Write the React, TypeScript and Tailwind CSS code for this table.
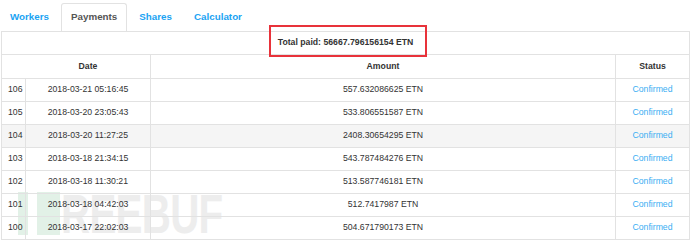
import * as React from "react"

const payments = [
  { id: 106, date: "2018-03-21 05:16:45", amount: "557.632086625 ETN" },
  { id: 105, date: "2018-03-20 23:05:43", amount: "533.806551587 ETN" },
  { id: 104, date: "2018-03-20 11:27:25", amount: "2408.30654295 ETN", hover: true },
  { id: 103, date: "2018-03-18 21:34:15", amount: "543.787484276 ETN" },
  { id: 102, date: "2018-03-18 11:30:21", amount: "513.587746181 ETN" },
  { id: 101, date: "2018-03-18 04:42:03", amount: "512.7417987 ETN" },
  { id: 100, date: "2018-03-17 22:02:03", amount: "504.671790173 ETN" },
]

const tabs = ["Workers", "Payments", "Shares", "Calculator"]

export default function App() {
  return (
    <div className="relative h-[242px] w-[690px] overflow-hidden bg-white font-['Liberation_Sans',Arial,sans-serif] text-[8.7px] text-[#333]">
      {/* watermark, sits behind the table text */}
      <div className="pointer-events-none absolute left-[18px] top-[192px] z-0 flex h-[43px] items-center">
        <div className="h-[43px] w-[10px] bg-[#e2f1e7]" />
        <div className="ml-[9px] h-[43px] w-[23px] bg-[#e2f1e7]" />
        <div className="ml-[1px] w-[220px] whitespace-nowrap">
          <span className="inline-block origin-left scale-x-[0.72] text-[56px] font-bold leading-none tracking-[-1px] text-[#ededed]">
            REEBUF
          </span>
        </div>
      </div>

      <div className="relative z-10 flex h-[31px] items-end">
        {tabs.map((tab) =>
          tab === "Payments" ? (
            <div
              key={tab}
              className="mr-[2px] flex h-[28px] items-center rounded-t-[3px] border border-b-0 border-[#e2e2e2] bg-white px-[9px] text-[9.8px] font-bold text-[#555]"
            >
              {tab}
            </div>
          ) : (
            <div
              key={tab}
              className="mr-[2px] flex h-[28px] items-center px-[10px] text-[9.8px] font-bold text-[#1aa3f3]"
            >
              {tab}
            </div>
          )
        )}
      </div>

      <div className="relative z-10 ml-[1px] w-[689px] border-x border-t border-[#e2e2e2]">
        <div className="relative flex h-[23px] items-center justify-center border-b border-[#e2e2e2] font-bold">
          <span>Total paid: 56667.796156154 ETN</span>
          <div className="absolute left-[267px] top-[-7px] h-[32px] w-[158px] border-2 border-[#e8323a]" />
        </div>

        <div className="flex h-[24px] border-b border-[#e2e2e2] font-bold">
          <div className="flex w-[149px] shrink-0 items-center justify-center border-r border-[#e2e2e2] pl-[24px]">
            Date
          </div>
          <div className="flex w-[465px] shrink-0 items-center justify-center border-r border-[#e2e2e2]">
            Amount
          </div>
          <div className="flex flex-1 items-center justify-center">Status</div>
        </div>

        {payments.map((p) => (
          <div
            key={p.id}
            className={`flex h-[23px] border-b border-[#e2e2e2] ${p.hover ? "bg-[#f5f5f5]" : "bg-transparent"}`}
          >
            <div className="flex w-[24px] shrink-0 items-center border-r border-[#e2e2e2] pl-[6px]">
              {p.id}
            </div>
            <div className="flex w-[125px] shrink-0 items-center justify-center border-r border-[#e2e2e2]">
              {p.date}
            </div>
            <div className="flex w-[465px] shrink-0 items-center justify-center border-r border-[#e2e2e2]">
              {p.amount}
            </div>
            <div className="flex flex-1 items-center justify-center text-[#3aaef3]">Confirmed</div>
          </div>
        ))}
      </div>
    </div>
  )
}
